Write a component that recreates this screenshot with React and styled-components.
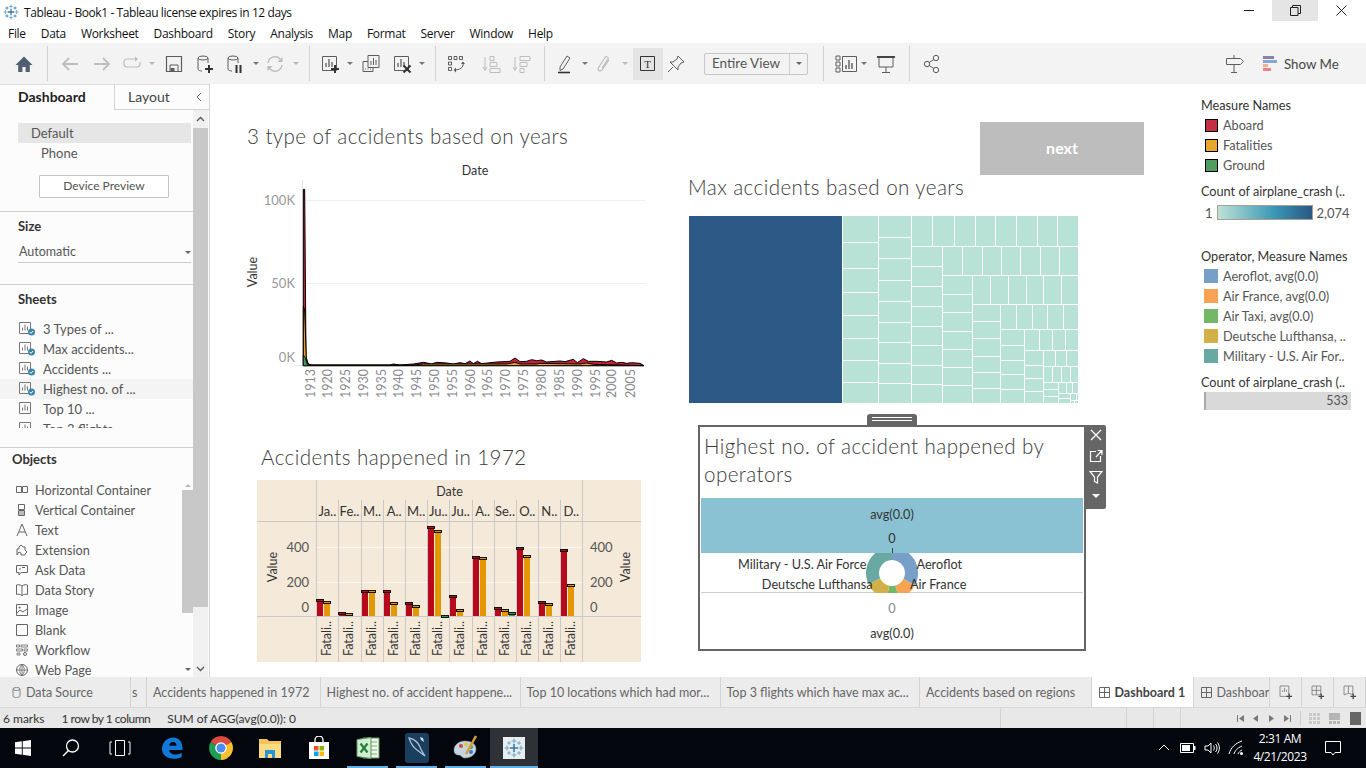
import React from "react";
import styled, { createGlobalStyle } from "styled-components";

const Global = createGlobalStyle`
  html, body { margin: 0; padding: 0; background: #fff; }
  body { font-family: Lato, "Open Sans", sans-serif; color: #333; overflow: hidden; }
  * { box-sizing: border-box; }
  svg { display: block; }
`;

const Page = styled.div`width: 1366px; height: 768px; display: flex; flex-direction: column; overflow: hidden;`;

/* ---------- title + menu ---------- */
const TitleBar = styled.div`height: 22px; display: flex; align-items: center; background: #fff; position: relative;`;
const TitleLogo = styled.div`margin-left: 3px; width: 16px; height: 16px; margin-top: 2px;`;
const TitleText = styled.div`margin-left: 5px; margin-top: 2px; font: 12px "Open Sans", sans-serif; letter-spacing: -0.41px; color: #111;`;
const WindowBtns = styled.div`margin-left: auto; padding-right: 2px; display: flex; height: 21px; align-self: flex-start;`;
const WinBtn = styled.div`width: 46px; height: 21px; display: flex; align-items: center; justify-content: center; background: ${p => (p.$on ? "#e5e5e5" : "transparent")};`;

const MenuBar = styled.div`height: 21px; display: flex; align-items: center; padding: 2px 0 0 8px; gap: 15px; font: 12px "Open Sans", sans-serif; letter-spacing: -0.3px; color: #111;`;

/* ---------- toolbar ---------- */
const Toolbar = styled.div`height: 41px; background: #f3f3f3; display: flex; align-items: center; position: relative;`;
const ToolCell = styled.div`flex: none; display: flex; align-items: center; justify-content: center; width: ${p => p.$w}px; height: ${p => p.$h || 24}px; margin-left: ${p => p.$ml}px; background: ${p => p.$bg || "transparent"};`;
const ToolSep = styled.div`flex: none; width: 1px; height: 35px; background: #d2d2d2; margin-left: ${p => p.$ml}px;`;
const Caret = styled.div`width: 0; height: 0; border-left: 3px solid transparent; border-right: 3px solid transparent; border-top: 3px solid ${p => p.$c || "#777"};`;
const ViewBox = styled.div`flex: none; display: flex; width: 104px; height: 22px; margin-left: ${p => p.$ml}px; border: 1px solid #c8c8c8; border-radius: 2px; font-size: 13.5px; color: #555; align-items: center;`;
const ViewLabel = styled.div`flex: 1; padding-left: 7px; height: 100%; line-height: 19px; border-right: 1px solid #d0d0d0;`;
const ViewArrow = styled.div`width: 17px; display: flex; justify-content: center;`;
const ShowMe = styled.div`flex: none; margin-left: ${p => p.$ml}px; display: flex; align-items: center; gap: 6px; font-size: 13.3px; color: #444;`;

/* ---------- layout ---------- */
const Main = styled.div`flex: 1; display: flex; min-height: 0;`;
const Sidebar = styled.aside`width: 210px; flex: none; display: flex; flex-direction: column; background: #fcfcfc; border-right: 1px solid #d4d4d4; font-size: 13px;`;
const SideTabs = styled.div`height: 26px; flex: none; display: flex; border-top: 1px solid #dcdcdc;`;
const SideTab = styled.div`line-height: 24px; width: ${p => p.$w}px; padding-left: ${p => p.$pl}px; font-size: 14px; font-weight: ${p => (p.$on ? 700 : 400)}; color: ${p => (p.$on ? "#222" : "#444")}; ${p => (p.$on ? "" : "border-left: 1px solid #d4d4d4; border-bottom: 1px solid #d4d4d4;")}`;
const SideTabEnd = styled.div`flex: 1; border-bottom: 1px solid #d4d4d4; display: flex; align-items: center; justify-content: flex-end; padding-right: 5px;`;
const SideBody = styled.div`flex: 1; display: flex; min-height: 0;`;
const SideContent = styled.div`width: 193px; flex: none; display: flex; flex-direction: column; min-height: 0;`;
const SideScroll = styled.div`width: 15px; flex: none; display: flex; flex-direction: column; background: #f0f0f0;`;
const ScrollBtn = styled.div`height: ${p => p.$h}px; flex: none; display: flex; align-items: center; justify-content: center;`;
const ScrollThumb = styled.div`height: ${p => p.$h}px; flex: none; background: ${p => p.$c || "#c8c8c8"};`;
const ScrollRest = styled.div`flex: 1;`;

const Section = styled.section`height: ${p => p.$h}px; flex: none; border-bottom: 1px solid #d0d0d0; padding-top: ${p => p.$pt || 0}px; overflow: hidden;`;
const DeviceRow = styled.div`height: 20px; line-height: 20px; margin-left: 18px; margin-right: 2px; padding-left: ${p => p.$pl}px; background: ${p => (p.$on ? "#e6e6e6" : "transparent")}; color: #555;`;
const DeviceBtn = styled.div`width: 130px; height: 23px; margin: 12px 0 0 39px; border: 1px solid #c4c4c4; border-radius: 1px; background: #fff; text-align: center; line-height: 20px; font-size: 12px; color: #555;`;
const SecTitle = styled.div`height: 20px; line-height: 20px; margin-left: ${p => p.$ml || 18}px; margin-top: ${p => p.$mt || 0}px; font-weight: 700; font-size: 13px; color: #333;`;
const SizeSelect = styled.div`margin: 6px 2px 0 18px; height: 21px; border-bottom: 1px solid #ccc; padding-left: 1px; font-size: 12.5px; line-height: 20px; color: #555; display: flex; align-items: center; justify-content: space-between;`;
const SheetList = styled.div`height: 109px; margin-top: 10px; overflow: hidden;`;
const SheetRow = styled.div`height: 20px; display: flex; align-items: center; padding-left: 19px; gap: 11px; color: #555; background: ${p => (p.$on ? "#f4f4f4" : "transparent")};`;
const ObjBody = styled.div`display: flex; height: 197px; margin-top: 11px;`;
const ObjList = styled.div`width: 182px; overflow: hidden;`;
const ObjRow = styled.div`height: 20px; display: flex; align-items: center; padding-left: 16px; gap: 7px; color: #555; font-size: 12.7px;`;
const ObjScroll = styled.div`width: 11px; display: flex; flex-direction: column;`;

/* ---------- dashboard ---------- */
const Canvas = styled.main`flex: 1; display: flex; min-width: 0; background: #fff;`;
const LeftCol = styled.div`width: 470px; flex: none; padding-top: 38px; display: flex; flex-direction: column;`;
const RightCol = styled.div`width: 510px; flex: none; padding-top: 38px; display: flex; flex-direction: column;`;
const ChartTitle = styled.h2`margin: 0; margin-left: ${p => p.$ml}px; margin-top: ${p => p.$mt || 0}px; font-weight: 300; font-size: 20.6px; line-height: 28px; color: #3c3c3c; letter-spacing: 0.42px;`;
const Chart1Wrap = styled.div`margin: 10px 0 0 30px; width: 420px; height: 250px;`;
const Chart3Wrap = styled.div`margin: 9px 0 0 47px; width: 384px; height: 182px; background: #f5eada;`;
const NextBtn = styled.div`margin-left: 300px; width: 164px; height: 53px; padding-bottom: 2px; background: #bdbdbd; color: #fff; font-weight: 700; font-size: 16px; display: flex; align-items: center; justify-content: center;`;
const TreeWrap = styled.div`margin: 15px 0 0 9px; width: 389px; height: 187px;`;
const Highlight = styled.div`position: relative; margin: 22px 0 0 18px; width: 388px; height: 226px; border: 2px solid #666; background: #fff; display: flex; flex-direction: column; padding: 0 1px;`;
const Grip = styled.div`position: absolute; left: 167px; top: -13px; width: 50px; height: 12px; border-radius: 3px 3px 0 0; background: #666; padding-top: 3px;`;
const GripLine = styled.div`height: 1px; margin: 0 5px 2px; background: #fff;`;
const FloatTools = styled.div`position: absolute; left: 386px; top: -2px; width: 20px; height: 84px; background: #666; border-radius: 0 2px 2px 0; display: flex; flex-direction: column; align-items: center; padding-top: 3px; gap: 7px;`;
const HlTitle = styled.div`font-weight: 300; font-size: 20.6px; line-height: 28px; color: #3c3c3c; padding: 5px 0 0 3px; height: 71px; letter-spacing: 0.42px;`;
const Band = styled.div`height: 55px; flex: none; background: #8bc2d3; position: relative; text-align: center; font-size: 12.7px; color: #333;`;
const BandText = styled.div`position: absolute; left: 0; right: 0; top: ${p => p.$t}px; line-height: 16px; color: ${p => p.$c || "#333"};`;
const Tick = styled.div`position: absolute; left: 50%; bottom: 0; width: 1px; height: 5px; background: #444;`;
const PieBand = styled.div`height: 40px; flex: none; overflow: visible; border-bottom: 1px solid #ccc;`;
const BottomBand = styled.div`flex: 1; position: relative; text-align: center; font-size: 12.7px;`;

/* ---------- legends ---------- */
const Legends = styled.div`flex: 1; padding: 13px 0 0 11px; display: flex; flex-direction: column; font-size: 13px;`;
const LegTitle = styled.div`line-height: 16px; height: 16px; margin-bottom: 2px; color: #333; font-size: 12.7px; margin-top: ${p => p.$mt || 0}px; white-space: nowrap;`;
const LegRow = styled.div`height: 20px; display: flex; align-items: center; color: #555; font-size: 12.7px; white-space: nowrap; padding-left: 3px; gap: 5px;`;
const Swatch = styled.div`width: ${p => p.$w}px; height: ${p => p.$h}px; flex: none; background: ${p => p.$c}; border: ${p => (p.$b ? "1px solid #000" : "none")}; margin-left: ${p => p.$ml || 0}px;`;
const GradRow = styled.div`display: flex; align-items: center; height: 15px; margin-top: 4px; gap: 4px; color: #555; font-size: 13px; padding-left: 4px;`;
const GradBar = styled.div`width: 96px; height: 15px; border: 1px solid #a8a090; background: linear-gradient(90deg, #bde2d8, #3a97b5 60%, #2b5783);`;
const SizeBar = styled.div`margin: 0 0 0 3px; width: 147px; height: 18px; background: #d9d9d9; border-left: 2px solid #aaa; text-align: right; padding-right: 3px; line-height: 18px; color: #555; font-size: 12.5px;`;

/* ---------- tabs, status ---------- */
const TabBar = styled.div`height: 31px; flex: none; display: flex; background: #ececec; border-bottom: 1px solid #d8d8d8; font-size: 12.5px; color: #666;`;
const Tab = styled.div`flex: none; width: ${p => p.$w}px; display: flex; align-items: center; padding-left: ${p => p.$pl || 6}px; gap: ${p => p.$g || 5}px; white-space: nowrap; overflow: hidden; border-right: 1px solid #d4d4d4; background: ${p => (p.$on ? "#fff" : "transparent")}; font-weight: ${p => (p.$on ? 700 : 400)}; color: ${p => (p.$on ? "#444" : "#666")};`;
const NewTab = styled.div`flex: none; width: 32px; display: flex; align-items: center; justify-content: center; border-right: 1px solid #d4d4d4;`;
const StatusBar = styled.div`height: 20px; flex: none; display: flex; align-items: center; background: #e8e8e8; font-size: 12px; color: #333;`;
const StatusText = styled.div`margin-left: ${p => p.$ml}px; white-space: nowrap; letter-spacing: ${p => p.$ls || 0}px;`;
const StatusCells = styled.div`margin-left: auto; height: 100%; display: flex;`;
const StatusCell = styled.div`width: ${p => p.$w}px; border-left: 1px solid #d4d4d4;`;
const StatusNav = styled.div`width: ${p => p.$w}px; border-left: 1px solid #d4d4d4;`;

/* ---------- taskbar ---------- */
const Taskbar = styled.footer`height: 40px; flex: none; background: #03060c; display: flex; color: #fff;`;
const TaskItem = styled.div`width: ${p => p.$w || 49}px; flex: none; position: relative; display: flex; align-items: center; justify-content: center; background: ${p => (p.$on ? "#2e3236" : "transparent")}; margin-left: ${p => p.$ml || 0}px;`;
const Running = styled.div`position: absolute; bottom: 0; left: ${p => p.$x}px; right: ${p => p.$x}px; height: 2px; background: #63b0e8;`;
const Tray = styled.div`margin-left: auto; padding-right: 12px; display: flex; align-items: center; position: relative;`;
const TrayIcon = styled.div`width: ${p => p.$w}px; display: flex; justify-content: center;`;
const Clock = styled.div`width: 64px; text-align: center; font: 12px/18px "Open Sans", sans-serif; letter-spacing: -0.4px;`;

/* ---------- icons ---------- */
const Ic = ({ s = 20, w, h, vb, children, ...r }) => (
  <svg width={w || s} height={h || s} viewBox={vb || "0 0 20 20"} fill="none" {...r}>{children}</svg>
);

function TableauLogo({ s = 16 }) {
  const pts = [
    [10, 10, 4, "#3a77a8"], [10, 3, 2.4, "#5a9fc8"], [10, 17, 2.4, "#5a9fc8"], [3, 10, 2.4, "#5a9fc8"], [17, 10, 2.4, "#5a9fc8"],
    [5, 5, 2, "#3a77a8"], [15, 5, 2, "#3a77a8"], [5, 15, 2, "#3a77a8"], [15, 15, 2, "#3a77a8"],
  ];
  return (
    <Ic s={s}>
      {pts.map(([x, y, r, c], i) => (
        <path key={i} d={`M${x - r} ${y}H${x + r}M${x} ${y - r}V${y + r}`} stroke={c} strokeWidth={r > 3 ? 1.6 : 1} />
      ))}
    </Ic>
  );
}

const G = "#5d5d5d";
const L = "#bdbdbd";
const Home = () => <Ic><path d="M10 2.5 1.5 11h2.7v7h4.2v-5h3.2v5h4.2v-7h2.7z" fill="#4e6072" /></Ic>;
const Back = () => <Ic><path d="M18 10H3M9 4 3 10l6 6" stroke={L} strokeWidth="1.8" /></Ic>;
const Fwd = () => <Ic><path d="M2 10h15M11 4l6 6-6 6" stroke={L} strokeWidth="1.8" /></Ic>;
const LoopI = () => <Ic><path d="M14 5H5a3 3 0 0 0-3 3v2a3 3 0 0 0 3 3h10a3 3 0 0 0 3-3V8" stroke={L} strokeWidth="1.2" /><path d="M13 2.5 16 5l-3 2.5z" fill={L} /></Ic>;
const Save = () => <Ic><path d="M2.5 2.5h15v15h-15z" stroke={G} strokeWidth="1.2" /><path d="M6 11h8v6.5H6z" stroke={G} /><path d="M6.5 14h4v3h-4z" fill={G} /></Ic>;
const Cyl = ({ children }) => <Ic><ellipse cx="8" cy="4" rx="5" ry="2" stroke={G} /><path d="M3 4v11c0 1.2 2 2 4 2M13 4v5" stroke={G} />{children}</Ic>;
const DsPlus = () => <Cyl><path d="M14 11v8M10 15h8" stroke="#333" strokeWidth="2" /></Cyl>;
const DsPause = () => <Cyl><path d="M11.5 11v8M15.5 11v8" stroke="#333" strokeWidth="2" /></Cyl>;
const Refresh = () => <Ic><path d="M3 9a7 7 0 0 1 12-4l2 2M17 11a7 7 0 0 1-12 4l-2-2" stroke={L} strokeWidth="1.4" /><path d="M17.5 3v5h-5zM2.5 17v-5h5z" fill={L} /></Ic>;
const BarsBox = ({ children, c = G }) => <Ic><path d="M2.5 2.5h14v14h-14z" stroke={c} /><path d="M6 13V9M9 13V5M12 13V8" stroke={c} strokeWidth="1.3" />{children}</Ic>;
const NewSheet = () => <BarsBox><path d="M15 11v8M11 15h8" stroke="#333" strokeWidth="2" /></BarsBox>;
const Dup = () => <Ic><path d="M7 1.5h11v12H7z" stroke={G} /><path d="M10 11V7M12.5 11V4M15 11V6" stroke={G} /><path d="M2 7.5h5M2 7.5v10h10v-4" stroke={G} /><path d="M4 15h1M6.5 15h1M9 15h1" stroke={G} /></Ic>;
const Clear = () => <BarsBox><path d="m11.5 11.5 7 7m0-7-7 7" stroke="#333" strokeWidth="2" /></BarsBox>;
const Swap = () => <Ic><g stroke={G}><path d="M2.5 2.5h3v3h-3zM8 2.5h3v3H8zM13.5 2.5h3v3h-3zM2.5 8h3v3h-3zM2.5 13.5h3v3h-3z" /></g><path d="M17 8c1 4-1 7-7 8" stroke={G} /><path d="m10 13.5-2.5 2.5 2.5 2.5zM15 10l2-2.5L19 10z" fill={G} /></Ic>;
const SortA = () => <Ic><path d="M4 3v13M2 13l2 3.5L6 13" stroke={L} /><path d="M9 2.5h4v4H9zM9 8.5h7v4H9zM9 14.5h10v4H9z" stroke={L} /></Ic>;
const SortD = () => <Ic><path d="M4 3v13M2 13l2 3.5L6 13" stroke={L} /><path d="M9 2.5h10v4H9zM9 8.5h7v4H9zM9 14.5h4v4H9z" stroke={L} /></Ic>;
const Pen = () => <Ic><path d="M12 2 15 4 8 15l-3 1.5L5 13z" stroke={G} /><path d="M3 18.5h12" stroke="#333" strokeWidth="1.6" /></Ic>;
const Clip = () => <Ic><path d="M15 6 8 16c-1.4 2-5 .4-3.6-2.2L11 3.5c1-1.6 4-.4 3 1.6L8 14" stroke={L} strokeWidth="1.2" /></Ic>;
const TBox = () => <Ic><path d="M2.5 2.5h14v14h-14z" stroke="#333" /><text x="9.5" y="14" textAnchor="middle" fontSize="11" fontFamily="Liberation Serif, serif" fill="#333">T</text></Ic>;
const PinI = () => <Ic><path d="m12 2 6 6-3 1-3 4 0 3-8-8 3 0 4-3zM7 13l-5 5" stroke={G} /></Ic>;
const LayoutI = () => <Ic w={22} h={20} vb="0 0 22 20"><path d="M1 2h4v4H1zM1 8h4v4H1zM1 14h4v4H1z" stroke={G} /><path d="M7.5 2.5h14v15h-14z" stroke={G} /><path d="M11 15v-4M14 15V6M17 15v-6" stroke={G} strokeWidth="1.4" /></Ic>;
const Present = () => <Ic><path d="M1 3h18" stroke="#444" strokeWidth="2" /><path d="M3 3v10h14V3M10 13v5M6 18.5h8" stroke={G} /></Ic>;
const Share = () => <Ic><circle cx="14" cy="4" r="2.7" stroke={G} /><circle cx="5" cy="10" r="2.7" stroke={G} /><circle cx="14" cy="16" r="2.7" stroke={G} /><path d="m7.2 8.5 4.6-3M7.2 11.5l4.6 3" stroke={G} /></Ic>;
const Sign = () => <Ic><path d="M1.5 4.5h14l3 3-3 3h-14z" stroke={G} /><path d="M9 1v3.5M9 10.5V18M6 18.5h6" stroke={G} /></Ic>;
const ShowMeI = () => (
  <Ic w={15} h={18} vb="0 0 15 18"><path d="M0 1h11v3H0z" fill="#8d7fa8" /><path d="M0 5h14v3H0z" fill="#83a8d2" /><path d="M0 9h5v3H0z" fill="#f3b286" /><path d="M0 13h8v3H0z" fill="#f07f8d" /></Ic>
);
const SheetIc = ({ done }) => (
  <Ic w={17} h={16} vb="0 0 17 16" style={{ flex: "none", marginRight: -4 }}>
    <path d="M.5 1.5h11v11H.5z" stroke="#777" />
    <path d="M3.5 9.5v-3M6 9.5v-6M8.5 9.5v-4" stroke="#777" />
    {done && <circle cx="12.5" cy="11" r="3.5" fill="#3d86ab" />}
    {done && <path d="m10.8 11 1.3 1.3 2-2.3" stroke="#fff" />}
  </Ic>
);
const OB = "#666";
const Ob = ({ children }) => <Ic s={12} vb="0 0 12 12" style={{ flex: "none" }}>{children}</Ic>;
const objIcons = [
  <Ob key="h"><path d="M.5 2.5h5v6h-5zM6.5 2.5h5v6h-5z" stroke={OB} /></Ob>,
  <Ob key="v"><path d="M2.5.5h6v5h-6zM2.5 6.5h6v5h-6z" stroke={OB} /><path d="M3 7h5v4H3z" fill="#bbb" /></Ob>,
  <Ob key="t"><path d="M1 12 6 0l5 12M3 8h6" stroke={OB} /></Ob>,
  <Ob key="e"><path d="M1 5h2V3l2-2 2 2h2v3l2 2-2 2v1H5V9L3 8 1 11z" stroke={OB} /></Ob>,
  <Ob key="a"><path d="M.5 1.5h11v7H5L3 11V8.500H.5z" stroke={OB} /><path d="M3 5h2M6 3.500h3" stroke={OB} /></Ob>,
  <Ob key="d"><path d="M6 2c-2-1.500-4-1.500-5.500-1v9.500c1.500-.5 3.500-.5 5.500 1 2-1.500 4-1.500 5.500-1V1C10 .500 8 .500 6 2zM6 2v9.500" stroke={OB} /></Ob>,
  <Ob key="i"><path d="M.5 .5h11v11H.5z" stroke={OB} /><path d="m1 9 3-3 3 2 4-3" stroke={OB} /><circle cx="3.500" cy="3.500" r="1" fill={OB} /></Ob>,
  <Ob key="b"><path d="M.5 .5h11v11H.5z" stroke={OB} /></Ob>,
  <Ob key="w"><path d="M.5 1h3v2h-3zM5 1h6.500v2H5zM.5 5h6v2h-6zM8 5h3.500v2H8zM1 9h3v2H1z" stroke={OB} strokeWidth=".8" /><circle cx="9" cy="10" r="1.500" stroke={OB} /></Ob>,
  <Ob key="g"><circle cx="6" cy="6" r="5.500" stroke={OB} /><path d="M.5 6h11M6 .5v11M6 .5c-3 3-3 8 0 11M6 .5c3 3 3 8 0 11" stroke={OB} strokeWidth=".8" /></Ob>,
];

/* ---------- helpers ---------- */
const slice = (cx, cy, r0, r1, a0, a1) => {
  const p = (r, a) => [cx + r * Math.sin((a * Math.PI) / 180), cy - r * Math.cos((a * Math.PI) / 180)];
  const [x0, y0] = p(r1, a0), [x1, y1] = p(r1, a1), [x2, y2] = p(r0, a1), [x3, y3] = p(r0, a0);
  const lg = a1 - a0 > 180 ? 1 : 0;
  return `M${x0} ${y0}A${r1} ${r1} 0 ${lg} 1 ${x1} ${y1}L${x2} ${y2}A${r0} ${r0} 0 ${lg} 0 ${x3} ${y3}Z`;
};

/* ---------- chart 1 ---------- */
const z = v => (v / 3).toFixed(2);
const poly = pts => pts.map(([x, y]) => `${z(x)},${z(y)}`).join(" ");
const areaRed = [[190, 88], [194, 88], [198, 590], [205, 612], [215, 615], [450, 615], [460, 612], [480, 615], [520, 612], [550, 607], [575, 612], [590, 607], [620, 609], [640, 612], [660, 608], [675, 611], [690, 603], [700, 611], [712, 604], [725, 611], [770, 606], [810, 604], [825, 594], [840, 605], [860, 604], [875, 599], [890, 602], [905, 600], [920, 606], [960, 603], [975, 605], [1000, 598], [1012, 608], [1030, 596], [1045, 604], [1070, 604], [1100, 606], [1115, 601], [1130, 609], [1145, 607], [1160, 610], [1175, 608], [1200, 610], [1212, 617], [190, 617]];
const areaOrg = [[190, 440], [194, 450], [199, 600], [205, 615], [520, 615], [550, 612], [800, 612], [825, 607], [840, 612], [890, 612], [900, 610], [1020, 612], [1040, 609], [1060, 613], [1212, 617], [190, 617]];
const areaGrn = [[190, 585], [195, 592], [203, 617], [190, 617]];
const years = [[212, 1913], [262, 1920], [316, 1925], [370, 1930], [425, 1935], [475, 1940], [530, 1945], [583, 1950], [637, 1955], [690, 1960], [743, 1965], [797, 1970], [850, 1975], [905, 1980], [958, 1985], [1012, 1990], [1066, 1995], [1115, 2000], [1170, 2005]];

function Chart1() {
  const ax = "#999";
  return (
    <svg width="420" height="250" viewBox="0 0 420 250" fontFamily="Lato, sans-serif">
      <text x="235" y="15" textAnchor="middle" fontSize="12.500" fill="#333">Date</text>
      <path d="M63 40.500H406M63 123.500H406" stroke="#f0f0f0" />
      <path d="M62.500 20V206M55 205.500H406" stroke="#e6e6e6" />
      <polygon points={poly(areaRed)} fill="#c72037" stroke="#000" strokeWidth="1" />
      <polygon points={poly(areaOrg)} fill="#e5a128" stroke="#000" strokeWidth="1" />
      <polygon points={poly(areaGrn)} fill="#3d9a5c" stroke="#000" strokeWidth=".8" />
      <text x="55" y="45" textAnchor="end" fontSize="13" fill={ax}>100K</text>
      <text x="55" y="128" textAnchor="end" fontSize="13" fill={ax}>50K</text>
      <text x="55" y="202" textAnchor="end" fontSize="13" fill={ax}>0K</text>
      <text transform="translate(17,112) rotate(-90)" textAnchor="middle" fontSize="12.500" fill="#333">Value</text>
      {years.map(([x, y]) => (
        <text key={y} transform={`translate(${(x / 3 + 4.500).toFixed(1)},238) rotate(-90)`} fontSize="12.500" fill="#8b8b94">{y}</text>
      ))}
    </svg>
  );
}

/* ---------- chart 3 ---------- */
const cells = [199, 265, 332, 400, 465, 532, 598, 665, 731, 799, 865, 931, 997];
const months = ["Ja..", "Fe..", "M..", "A..", "M..", "Ju..", "Ju..", "A..", "Se..", "O..", "N..", "D.."];
const bars = [
  [373, 379], [412, 415], [346, 346], [346, 382], [382, 391], [154, 166, 420],
  [361, 403], [244, 247], [397, 403, 412], [217, 241], [379, 385], [223, 328],
];
const barCols = ["#b60a1c", "#e39802", "#2f9e4f"];
const cx = v => v / 3 - 7;
const cy = v => v / 3 - 5;

function Chart3() {
  const line = "#c9c9c9";
  return (
    <svg width="384" height="182" viewBox="0 0 384 182" fontFamily="Lato, sans-serif" fontSize="13" fill="#333">
      <path d={`M0 41.500H384M0 136.500H384`} stroke={line} />
      <path d={`M59 67.500H325M59 102.500H325`} stroke="#fbf7ef" />
      {cells.map((c, i) => (
        <path key={c} d={`M${cx(c).toFixed(0)}.5 ${i === 0 || i === 12 ? 0 : 20}V182`} stroke={line} />
      ))}
      <g shapeRendering="crispEdges">
        {bars.map((vals, i) =>
          vals.map((top, j) => {
            const x = Math.round(cx(cells[i])) + 1 + j * 7;
            const y = Math.round(cy(top));
            return (
              <g key={`${i}-${j}`}>
                <rect x={x} y={y} width="6" height={136 - y} fill={barCols[j]} />
                <rect x={x - 0.500} y={y + 0.500} width="7" height="2" fill={barCols[j]} stroke="#111" strokeWidth="1" />
              </g>
            );
          })
        )}
      </g>
      <text x="192.500" y="16" textAnchor="middle" fontSize="12.500">Date</text>
      {months.map((m, i) => (
        <text key={i} x={(cx(cells[i]) + cx(cells[i + 1])) / 2} y="36" textAnchor="middle" fontSize="13">{m}</text>
      ))}
      {[["400", 72], ["200", 107], ["0", 132]].map(([t, y]) => (
        <g key={t} fill="#555">
          <text x="52" y={y} textAnchor="end">{t}</text>
          <text x="333" y={y}>{t}</text>
        </g>
      ))}
      <text transform="translate(20,87) rotate(-90)" textAnchor="middle" fontSize="12.500">Value</text>
      <text transform="translate(373,87) rotate(-90)" textAnchor="middle" fontSize="12.500">Value</text>
      {months.map((m, i) => (
        <text key={i} transform={`translate(${(cx(cells[i]) + 15).toFixed(1)},176) rotate(-90)`} fontSize="12.500">Fatali..</text>
      ))}
    </svg>
  );
}

/* ---------- treemap (coordinates: 3x pixels) ---------- */
const tm = [];
const col = (x0, x1, ys) => ys.forEach(([a, b]) => tm.push([x0, a, x1, b]));
const row = (y0, y1, xs) => xs.forEach(([a, b]) => tm.push([a, y0, b, y1]));
col(473, 580, [[33, 112], [113, 190], [191, 262], [263, 331], [332, 400], [401, 466], [467, 532], [533, 594]]);
col(581, 679, [[33, 97], [98, 160], [161, 226], [227, 289], [290, 352], [353, 412], [413, 475], [476, 535], [536, 594]]);
row(33, 123, [[680, 742], [743, 808], [809, 871], [872, 931], [932, 994], [995, 1057], [1058, 1117], [1118, 1179]]);
col(680, 772, [[125, 183], [185, 243], [245, 303], [305, 363], [365, 420], [422, 480], [482, 537], [539, 594]]);
row(125, 210, [[773, 832], [833, 892], [893, 949], [950, 1006], [1007, 1066], [1067, 1123], [1124, 1179]]);
col(773, 862, [[212, 267], [269, 321], [323, 378], [380, 432], [434, 486], [488, 540], [542, 594]]);
row(212, 297, [[863, 916], [917, 970], [971, 1024], [1025, 1075], [1076, 1129], [1130, 1179]]);
col(863, 946, [[299, 348], [350, 399], [401, 453], [455, 501], [503, 549], [551, 594]]);
row(299, 372, [[947, 994], [995, 1042], [1043, 1087], [1088, 1135], [1136, 1179]]);
col(947, 1018, [[374, 420], [422, 465], [467, 507], [509, 552], [554, 594]]);
row(374, 435, [[1019, 1063], [1064, 1102], [1103, 1141], [1142, 1179]]);
col(1019, 1075, [[437, 480], [482, 519], [521, 558], [560, 594]]);
row(437, 483, [[1076, 1111], [1112, 1144], [1145, 1179]]);
row(485, 531, [[1076, 1102], [1103, 1129], [1130, 1156], [1157, 1179]]);
col(1076, 1120, [[533, 552], [554, 573], [575, 594]]);
row(533, 564, [[1121, 1144], [1145, 1162], [1163, 1179]]);
col(1121, 1156, [[566, 579], [581, 594]]);
row(566, 585, [[1157, 1174], [1176, 1179]]);
row(587, 594, [[1157, 1167], [1169, 1179]]);

function Treemap() {
  return (
    <svg width="389" height="187" viewBox="12 33 1167 561" shapeRendering="crispEdges">
      <rect x="12" y="33" width="459" height="561" fill="#2c5985" />
      {tm.map(([a, b, c, d], i) => (
        <rect key={i} x={a} y={b} width={c - a} height={d - b} fill="#b9e2d7" />
      ))}
    </svg>
  );
}

/* ---------- donut ---------- */
function Donut() {
  const c = 191, y = 20;
  const parts = [[0, 118, "#779fc7"], [118, 165, "#f7a354"], [165, 192, "#73b866"], [192, 245, "#d2b048"], [245, 360, "#6aa8a2"]];
  return (
    <svg width="384" height="40" viewBox="0 0 384 40" fontFamily="Lato, sans-serif" fontSize="12.700" fill="#333" style={{ overflow: "hidden" }}>
      {parts.map(([a, b, col2]) => <path key={a} d={slice(c, y, 13, 26, a, b)} fill={col2} />)}
      <text x="165.500" y="15.500" textAnchor="end">Military - U.S. Air Force</text>
      <text x="215.500" y="15.500">Aeroflot</text>
      <text x="171.500" y="35.500" textAnchor="end">Deutsche Lufthansa</text>
      <text x="209" y="35.500">Air France</text>
    </svg>
  );
}

/* ---------- taskbar logos ---------- */
const WinLogo = () => <Ic s={16} vb="0 0 16 16"><path d="M0 2.300 6.800 1.300v6.300H0zM7.700 1.200 16 0v7.600H7.700zM0 8.400h6.800v6.300L0 13.700zM7.700 8.400H16V16l-8.300-1.200z" fill="#fff" /></Ic>;
const SearchI = () => <Ic s={20}><circle cx="11.500" cy="8" r="6" stroke="#fff" strokeWidth="1.300" /><path d="M7.500 12.500 2 18" stroke="#fff" strokeWidth="1.500" /></Ic>;
const TaskView = () => <Ic w={22} h={20} vb="0 0 22 20"><path d="M6.500 2.500h9v15h-9z" stroke="#fff" /><path d="M3 4H1v12h2M19 4h2v12h-2" stroke="#fff" /></Ic>;
const Edge = () => (
  <Ic s={24} vb="0 0 24 24">
    <path fillRule="evenodd" d="M22.500 14H9.200c.3 3 3 4.500 6 4.500 2.500 0 5-.8 6.500-1.800v4.300c-2 1-4.500 1.800-8 1.800C7 22.800 2 19 2 12.800 2 6.500 7 1.500 13 1.500c6 0 9.500 4.500 9.500 10.500zM9.200 9.800h7.300c0-2.100-1.300-3.800-3.500-3.800-2.100 0-3.600 1.600-3.800 3.800z" fill="#1078d7" />
  </Ic>
);
const Chrome = () => (
  <Ic s={24} vb="0 0 24 24">
    <path d={slice(12, 12, 0, 12, -60, 60)} fill="#dd4b3e" />
    <path d={slice(12, 12, 0, 12, 60, 180)} fill="#fbc02d" />
    <path d={slice(12, 12, 0, 12, 180, 300)} fill="#1e9e54" />
    <circle cx="12" cy="12" r="5.800" fill="#fff" />
    <circle cx="12" cy="12" r="4.500" fill="#4a8df0" />
  </Ic>
);
const Folder = () => (
  <Ic s={24} vb="0 0 24 24">
    <path d="M1 3h8l2 2h12v17H1z" fill="#f2c55c" />
    <path d="M1 8h22v14H1z" fill="#fbdc83" />
    <path d="M7 14h10v8h-3v-4h-4v4H7z" fill="#2c92d6" />
  </Ic>
);
const Store = () => (
  <Ic s={24} vb="0 0 24 24">
    <path d="M2 6h20v17H2z" fill="#fff" />
    <path d="M8 6V4a4 4 0 0 1 8 0v2" stroke="#fff" strokeWidth="1.300" />
    <path d="M7 10h4.500v4.500H7z" fill="#f25022" />
    <path d="M12.500 10H17v4.500h-4.500z" fill="#7fba00" />
    <path d="M7 15.500h4.500V20H7z" fill="#00a4ef" />
    <path d="M12.500 15.500H17V20h-4.500z" fill="#ffb900" />
  </Ic>
);
const Excel = () => (
  <Ic s={24} vb="0 0 24 24">
    <path d="M7 2h16v20H7z" fill="#eef5ea" stroke="#5a9a5a" />
    <path d="M15 6h6M15 10h6M15 14h6M15 18h6" stroke="#7ab07a" />
    <path d="M1 3.500 15 1.500v21l-14-2z" fill="#d6ecd0" stroke="#4f9a58" />
    <path d="m4.500 7.500 7 9m0-9-7 9" stroke="#22803c" strokeWidth="2.200" />
  </Ic>
);
const Workbench = () => (
  <svg width="24" height="30" viewBox="0 0 24 30">
    <rect width="24" height="30" rx="3" fill="#1a3e5e" />
    <path d="M4 5c5 1 9 4 11 9 1 3 3 6 5 9-3-2-5-4-8-6-3-2-6-6-8-12z" fill="none" stroke="#a9c0d4" strokeWidth="1.300" />
    <path d="m15 4 3 1 1 4-3-2z" fill="#d5e0ea" />
  </svg>
);
const Palette = () => (
  <Ic s={26} vb="0 0 26 26">
    <path d="M12 6c6 0 11 3 11 8s-5 9-11 9c-4 0-3-3-6-3-3.500 0-5-2-5-5 0-5 5-9 11-9z" fill="#c5d4e0" stroke="#8aa" strokeWidth=".5" />
    <circle cx="8" cy="11" r="2" fill="#d0483c" /><circle cx="13" cy="9.500" r="2" fill="#e9c23e" /><circle cx="18" cy="12" r="2" fill="#3fa34d" /><circle cx="18" cy="17" r="2" fill="#3c78c8" />
    <path d="M23 1 13 19" stroke="#d99a3c" strokeWidth="2.500" />
  </Ic>
);
function TableauLogoInner() {
  const items = [[10, 10, 4], [10, 3, 2.500], [10, 17, 2.500], [3, 10, 2.500], [17, 10, 2.500], [5, 5, 1.800], [15, 5, 1.800], [5, 15, 1.800], [15, 15, 1.800]];
  return items.map(([x, y, r], i) => <path key={i} d={`M${x - r} ${y}H${x + r}M${x} ${y - r}V${y + r}`} stroke={i === 0 ? "#3a77a8" : "#6fa8cc"} strokeWidth={i === 0 ? 1.600 : 1.100} />);
}
const TbTile = () => (
  <svg width="22" height="22" viewBox="0 0 22 22"><rect width="22" height="22" fill="#e8edf0" /><g transform="translate(1,1)"><TableauLogoInner /></g></svg>
);

/* ---------- data ---------- */
const toolSpec = [
  { c: 24, w: 20, el: <Home /> }, { c: 47.5, sep: 1 },
  { c: 70, w: 20, el: <Back /> }, { c: 102, w: 20, el: <Fwd /> }, { c: 132, w: 20, el: <LoopI /> }, { c: 152, w: 6, el: <Caret $c="#bbb" /> },
  { c: 174, w: 20, el: <Save /> }, { c: 205, w: 20, el: <DsPlus /> }, { c: 235, w: 20, el: <DsPause /> }, { c: 256, w: 6, el: <Caret /> },
  { c: 275, w: 20, el: <Refresh /> }, { c: 296, w: 6, el: <Caret $c="#bbb" /> }, { c: 309, sep: 1 },
  { c: 330, w: 20, el: <NewSheet /> }, { c: 350, w: 6, el: <Caret /> }, { c: 371, w: 20, el: <Dup /> }, { c: 402, w: 20, el: <Clear /> }, { c: 422, w: 6, el: <Caret /> }, { c: 435.5, sep: 1 },
  { c: 456, w: 20, el: <Swap /> }, { c: 491, w: 20, el: <SortA /> }, { c: 521, w: 20, el: <SortD /> }, { c: 544.5, sep: 1 },
  { c: 565, w: 20, el: <Pen /> }, { c: 585, w: 6, el: <Caret /> }, { c: 604, w: 20, el: <Clip /> }, { c: 625, w: 6, el: <Caret $c="#bbb" /> },
  { c: 648, w: 30, h: 32, bg: "#e4e4e4", el: <TBox /> }, { c: 676, w: 20, el: <PinI /> },
  { c: 756, view: 1, w: 104 }, { c: 823, sep: 1 },
  { c: 846, w: 22, el: <LayoutI /> }, { c: 864, w: 6, el: <Caret /> }, { c: 885.5, w: 20, el: <Present /> }, { c: 909.5, sep: 1 },
  { c: 932, w: 20, el: <Share /> }, { c: 1235, w: 20, el: <Sign /> },
];
function ToolItems() {
  let end = 0;
  return toolSpec.map((t, i) => {
    const w = t.sep ? 1 : t.w;
    const ml = +(t.c - w / 2 - end).toFixed(1);
    end = t.c + w / 2;
    if (t.sep) return <ToolSep key={i} $ml={ml} />;
    if (t.view) return (
      <ViewBox key={i} $ml={ml}><ViewLabel>Entire View</ViewLabel><ViewArrow><Caret $c="#666" /></ViewArrow></ViewBox>
    );
    return <ToolCell key={i} $w={w} $h={t.h} $ml={ml} $bg={t.bg}>{t.el}</ToolCell>;
  });
}

const menus = ["File", "Data", "Worksheet", "Dashboard", "Story", "Analysis", "Map", "Format", "Server", "Window", "Help"];
const sheets = [["3 Types of ...", 1], ["Max accidents...", 1], ["Accidents ...", 1], ["Highest no. of ...", 1, 1], ["Top 10 ...", 0], ["Top 3 flights", 0]];
const objects = ["Horizontal Container", "Vertical Container", "Text", "Extension", "Ask Data", "Data Story", "Image", "Blank", "Workflow", "Web Page"];
const legend1 = [["Aboard", "#c42f43"], ["Fatalities", "#e8a72c"], ["Ground", "#4f9d62"]];
const legend2 = [["Aeroflot, avg(0.0)", "#779fc7"], ["Air France, avg(0.0)", "#f7a354"], ["Air Taxi, avg(0.0)", "#73b866"], ["Deutsche Lufthansa, ..", "#d2b048"], ["Military - U.S. Air For..", "#6aa8a2"]];
const tabs = [["Accidents happened in 1972", 173.5], ["Highest no. of accident happene...", 200], ["Top 10 locations which had mor...", 200], ["Top 3 flights which have max ac...", 199.5], ["Accidents based on regions", 171.5]];

const DashIc = () => <Ic s={11} vb="0 0 11 11" style={{ flex: "none" }}><path d="M.5 .5h10v10H.5zM5.500 .5v10M.5 5.500h10" stroke="#666" /></Ic>;
const Up = ({ c = "#555" }) => <Ic s={9} vb="0 0 9 9"><path d="m1 6 3.500-3.500L8 6" stroke={c} strokeWidth="1.300" /></Ic>;
const Down = ({ c = "#555" }) => <Ic s={9} vb="0 0 9 9"><path d="m1 3 3.500 3.500L8 3" stroke={c} strokeWidth="1.300" /></Ic>;

function NavIcons() {
  /* x coordinates measured from the left edge of the status cell (x = 1180) */
  return (
    <svg width="186" height="20" viewBox="0 0 186 20">
      <path d="M56 7h1v7h-1zM63 7l-5 3.500 5 3.500zM77 7l-5 3.500 5 3.500zM88 7l5 3.500-5 3.500zM103 7l5 3.500-5 3.500zM109 7h1v7h-1z" fill="#777" />
      <path d="M119.500 3v15" stroke="#d0d0d0" />
      <path d="M128 5h3v3h-3zM132 5h3v3h-3zM136 5h3v3h-3zM128 9h3v3h-3zM132 9h3v3h-3zM136 9h3v3h-3zM128 13h3v3h-3zM132 13h3v3h-3zM136 13h3v3h-3z" fill="#c9c9c9" />
      <path d="M148 5h11v7h-11zM148 13h3v3h-3zM152 13h3v3h-3zM156 13h3v3h-3z" fill="#b5b5b5" />
      <path d="M169 4h11v13h-11z" fill="#666" />
    </svg>
  );
}

export default function App() {
  return (
    <Page>
      <Global />
      <TitleBar>
        <TitleLogo><TableauLogo /></TitleLogo>
        <TitleText>Tableau - Book1 - Tableau license expires in 12 days</TitleText>
        <WindowBtns>
          <WinBtn><Ic s={11} vb="0 0 11 11"><path d="M0 5.500h10" stroke="#222" /></Ic></WinBtn>
          <WinBtn $on><Ic s={11} vb="0 0 11 11"><path d="M.5 2.500h7.500v8H.5zM2.500 2.500V.5h8v8H8" stroke="#222" /></Ic></WinBtn>
          <WinBtn><Ic s={11} vb="0 0 11 11"><path d="m.5 .5 10 10m0-10-10 10" stroke="#222" /></Ic></WinBtn>
        </WindowBtns>
      </TitleBar>
      <MenuBar>{menus.map(m => <span key={m}>{m}</span>)}</MenuBar>
      <Toolbar>
        <ToolItems />
        <ShowMe $ml={18}><ShowMeI />Show Me</ShowMe>
      </Toolbar>

      <Main>
        <Sidebar>
          <SideTabs>
            <SideTab $on $w={114} $pl={18}>Dashboard</SideTab>
            <SideTab $w={75} $pl={13}>Layout</SideTab>
            <SideTabEnd><Ic s={10} vb="0 0 10 10"><path d="M7 1 3 5l4 4" stroke="#666" /></Ic></SideTabEnd>
          </SideTabs>
          <SideBody>
            <SideContent>
              <Section $h={102} $pt={13}>
                <DeviceRow $on $pl={13}>Default</DeviceRow>
                <DeviceRow $pl={23}>Phone</DeviceRow>
                <DeviceBtn>Device Preview</DeviceBtn>
              </Section>
              <Section $h={73} $pt={4}>
                <SecTitle>Size</SecTitle>
                <SizeSelect>Automatic<Caret $c="#666" /></SizeSelect>
              </Section>
              <Section $h={163} $pt={4}>
                <SecTitle>Sheets</SecTitle>
                <SheetList>
                  {sheets.map(([n, d, on]) => (
                    <SheetRow key={n} $on={on}><SheetIc done={d} />{n}</SheetRow>
                  ))}
                </SheetList>
              </Section>
              <SecTitle $ml={12} $mt={1}>Objects</SecTitle>
              <ObjBody>
                <ObjList>
                  {objects.map((o, i) => <ObjRow key={o}>{objIcons[i]}{o}</ObjRow>)}
                </ObjList>
                <ObjScroll>
                  <ScrollBtn $h={10}><Caret style={{ transform: "rotate(180deg)" }} $c="#bbb" /></ScrollBtn>
                  <ScrollThumb $h={123} />
                  <ScrollRest />
                  <ScrollBtn $h={16}><Caret $c="#666" /></ScrollBtn>
                </ObjScroll>
              </ObjBody>
            </SideContent>
            <SideScroll>
              <ScrollBtn $h={18}><Up /></ScrollBtn>
              <ScrollThumb $h={479} />
              <ScrollRest />
              <ScrollBtn $h={18}><Down /></ScrollBtn>
            </SideScroll>
          </SideBody>
        </Sidebar>

        <Canvas>
          <LeftCol>
            <ChartTitle $ml={37}>3 type of accidents based on years</ChartTitle>
            <Chart1Wrap><Chart1 /></Chart1Wrap>
            <ChartTitle $ml={51} $mt={33}>Accidents happened in 1972</ChartTitle>
            <Chart3Wrap><Chart3 /></Chart3Wrap>
          </LeftCol>
          <RightCol>
            <NextBtn>next</NextBtn>
            <ChartTitle $ml={8} $mt={-2}>Max accidents based on years</ChartTitle>
            <TreeWrap><Treemap /></TreeWrap>
            <Highlight>
              <Grip><GripLine /><GripLine /></Grip>
              <FloatTools>
                <Ic s={14} vb="0 0 14 14"><path d="m2 2 10 10m0-10L2 12" stroke="#fff" strokeWidth="1.400" /></Ic>
                <Ic s={14} vb="0 0 14 14"><path d="M7 2.500H1.500v10h10V7M7 8l6-6.500M8.500 1.500H13V6" stroke="#fff" strokeWidth="1.200" /></Ic>
                <Ic s={14} vb="0 0 14 14"><path d="M1 1.500h12L8.500 7v6l-3-1.500V7z" stroke="#fff" strokeWidth="1.200" /></Ic>
                <Ic s={10} vb="0 0 10 10"><path d="M1 3h8L5 7z" fill="#fff" /></Ic>
              </FloatTools>
              <HlTitle>Highest no. of accident happened by<br />operators</HlTitle>
              <Band>
                <BandText $t={8}>avg(0.0)</BandText>
                <BandText $t={32}>0</BandText>
                <Tick />
              </Band>
              <PieBand><Donut /></PieBand>
              <BottomBand>
                <BandText $t={7} $c="#888">0</BandText>
                <BandText $t={32}>avg(0.0)</BandText>
              </BottomBand>
            </Highlight>
          </RightCol>
          <Legends>
            <LegTitle>Measure Names</LegTitle>
            {legend1.map(([n, c]) => (
              <LegRow key={n}><Swatch $w={13} $h={13} $c={c} $b $ml={1} />{n}</LegRow>
            ))}
            <LegTitle $mt={8}>Count of airplane_crash (..</LegTitle>
            <GradRow>1<GradBar />2,074</GradRow>
            <LegTitle $mt={28}>Operator, Measure Names</LegTitle>
            {legend2.map(([n, c]) => (
              <LegRow key={n}><Swatch $w={14} $h={14} $c={c} />{n}</LegRow>
            ))}
            <LegTitle $mt={8}>Count of airplane_crash (..</LegTitle>
            <SizeBar>533</SizeBar>
          </Legends>
        </Canvas>
      </Main>

      <TabBar>
        <Tab $w={131} $pl={10} $g={3}>
          <Ic s={13} vb="0 0 13 13" style={{ flex: "none" }}><ellipse cx="6.500" cy="3" rx="3.500" ry="1.500" stroke="#888" /><path d="M3 3v7c0 2 7 2 7 0V3" stroke="#888" /></Ic>
          Data Source
        </Tab>
        <Tab $w={16} $pl={1}>s</Tab>
        {tabs.map(([t, w]) => <Tab key={t} $w={w}>{t}</Tab>)}
        <Tab $on $w={102} $pl={7}><DashIc />Dashboard 1</Tab>
        <Tab $w={76.500} $pl={7}><DashIc />Dashboard 2</Tab>
        <NewTab><Ic s={16}><path d="M2.500 2.500h11v13h-11z" stroke="#777" /><path d="M5.500 10V8M8 10V5M10.500 10V7" stroke="#777" /><path d="M14 12v7M10.500 15.500h7" stroke="#444" strokeWidth="1.600" /></Ic></NewTab>
        <NewTab><Ic s={16}><path d="M2.500 2.500h11v11h-11zM8 2.500v11M2.500 8h11" stroke="#777" /><path d="M14 12v7M10.500 15.500h7" stroke="#444" strokeWidth="1.600" /></Ic></NewTab>
        <NewTab><Ic s={16}><path d="M2.500 2.500h6l5 0v11l-5-2-6 2zM8 2.500v9" stroke="#777" /><path d="M14 12v7M10.500 15.500h7" stroke="#444" strokeWidth="1.600" /></Ic></NewTab>
      </TabBar>
      <StatusBar>
        <StatusText $ml={3}>6 marks</StatusText>
        <StatusText $ml={17} $ls={-0.5}>1 row by 1 column</StatusText>
        <StatusText $ml={17}>SUM of AGG(avg(0.0)): 0</StatusText>
        <StatusCells>
          <StatusCell $w={126} />
          <StatusCell $w={27} />
          <StatusCell $w={27} />
          <StatusNav $w={186}><NavIcons /></StatusNav>
        </StatusCells>
      </StatusBar>

      <Taskbar>
        <TaskItem $w={46}><WinLogo /></TaskItem>
        <TaskItem $w={50}><SearchI /></TaskItem>
        <TaskItem $w={48}><TaskView /></TaskItem>
        <TaskItem $ml={3}><Edge /></TaskItem>
        <TaskItem><Chrome /></TaskItem>
        <TaskItem><Folder /></TaskItem>
        <TaskItem><Store /></TaskItem>
        <TaskItem><Excel /><Running $x={4} /></TaskItem>
        <TaskItem><Workbench /><Running $x={4} /></TaskItem>
        <TaskItem><Palette /><Running $x={4} /></TaskItem>
        <TaskItem $on $w={48}><TbTile /><Running $x={0} /></TaskItem>
        <Tray>
          <TrayIcon $w={24}><Ic s={12} vb="0 0 12 12"><path d="m1 8 5-5 5 5" stroke="#fff" /></Ic></TrayIcon>
          <TrayIcon $w={24}><Ic w={16} h={12} vb="0 0 16 12"><path d="M.5 1.500h13v9H.5z" stroke="#fff" /><path d="M2 3h8v6H2z" fill="#fff" /><path d="M14 4h1.500v4H14z" fill="#fff" /></Ic></TrayIcon>
          <TrayIcon $w={24}><Ic s={16} vb="0 0 16 16"><path d="M1 6h3l3-3v10l-3-3H1zM9.500 5.500c1 1.500 1 3.500 0 5M11.500 4c2 2.500 2 5.500 0 8M13.500 2.500c2.500 3.500 2.500 7.500 0 11" stroke="#fff" /></Ic></TrayIcon>
          <TrayIcon $w={24}><Ic s={16} vb="0 0 16 16"><path d="M1 14C3 7 8 3 14 1M6 14c1-3 3-6 8-8M10 14c1-2 2-3 4-4" stroke="#fff" /><circle cx="13.500" cy="13.500" r="1.500" fill="#fff" /></Ic></TrayIcon>
          <Clock>2:31 AM<br />4/21/2023</Clock>
          <TrayIcon $w={42}><Ic w={16} h={16} vb="0 0 16 16"><path d="M.5 1.500h15v11H10l-2 2.500-2-2.500H.5z" stroke="#fff" /></Ic></TrayIcon>
        </Tray>
      </Taskbar>
    </Page>
  );
}
